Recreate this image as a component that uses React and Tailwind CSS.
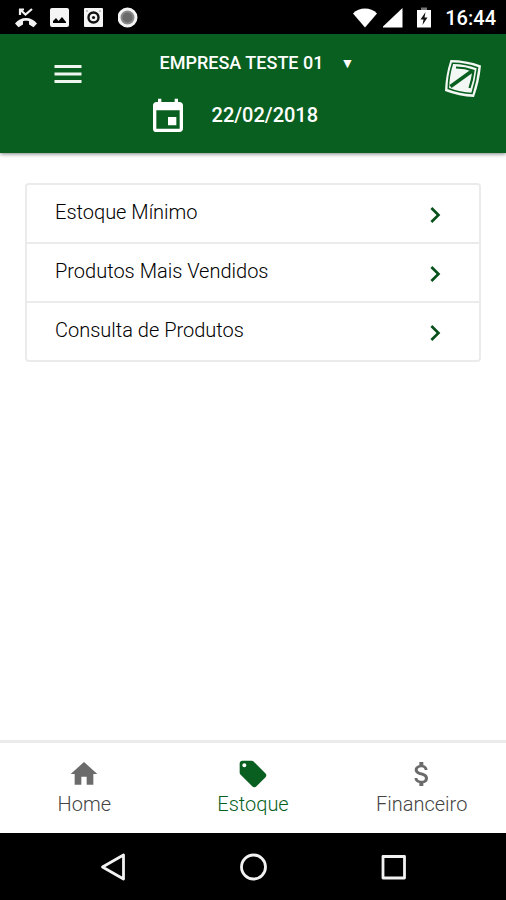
import { useState } from "react";
import {
  MdAttachMoney,
  MdChevronRight,
  MdEvent,
  MdHome,
  MdLocalOffer,
  MdMenu
} from "react-icons/md";

const reports = ["Estoque Mínimo", "Produtos Mais Vendidos", "Consulta de Produtos"];

const tabs = [
  { name: "Home", icon: MdHome },
  { name: "Estoque", icon: MdLocalOffer },
  { name: "Financeiro", icon: MdAttachMoney }
];

const StatusBar = () => (
  <div className="flex h-[34px] items-center justify-between bg-black pl-3.5 pr-2.5 pt-px text-white">
    <div className="flex items-center gap-3">
      <svg className="h-6 w-6" viewBox="0 0 24 24" aria-hidden="true">
        <path d="M6 9V3M5 3.500h5M6 3.500l5.500 5L18 3" fill="none" stroke="#f2f2f2" strokeWidth="2.200" />
        <path d="M1 17.500C6 10 18 10 23 17.500l-3.500 3.700-4.500-2.700v-3.200c-2-.6-4-.6-6 0v3.200l-4.500 2.700z" fill="#f2f2f2" />
      </svg>
      <svg className="h-[22px] w-[22px]" viewBox="0 0 22 22" aria-hidden="true">
        <rect x="0" y="1" width="19" height="19" rx="2" fill="#f5f5f5" />
        <path d="M3 16v-2l3-3 2.500 3 3.500-4 4 5v1z" fill="#000" />
      </svg>
      <svg className="h-[22px] w-[22px]" viewBox="0 0 22 22" aria-hidden="true">
        <rect x="0" y="1" width="19" height="19" rx="1" fill="#f5f5f5" />
        <circle cx="9.500" cy="10.500" r="5" fill="none" stroke="#111" strokeWidth="2.400" />
        <circle cx="9.500" cy="10.500" r="1.600" fill="#111" />
        <circle cx="3" cy="4" r="0.800" fill="#888" />
        <circle cx="16" cy="4" r="0.800" fill="#888" />
      </svg>
      <svg className="h-[22px] w-[22px]" viewBox="0 0 22 22" aria-hidden="true">
        <circle cx="9.500" cy="10.500" r="8.500" fill="#8a8a8a" stroke="#f5f5f5" strokeWidth="3" />
        <circle cx="9.500" cy="10.500" r="5" fill="#6a6a6a" />
      </svg>
    </div>
    <div className="flex items-center">
      <svg className="h-[22px] w-[26px]" viewBox="0 0 26 22" aria-hidden="true">
        <path d="M0 6.500C6-.2 18-.2 24 6.500L12 20.500z" fill="#fff" />
      </svg>
      <svg className="ml-1 h-[22px] w-[22px]" viewBox="0 0 22 22" aria-hidden="true">
        <path d="M19.500 1v19.500H-1z" fill="#fff" />
      </svg>
      <svg className="ml-3 h-[22px] w-4" viewBox="0 0 16 22" aria-hidden="true">
        <path d="M4 0.500h6V3H4z" fill="#777" />
        <path d="M0 3h14v17.500H0z" fill="#fff" />
        <path d="M8.500 5L3.500 12.500H6.500L5.500 18L10.500 10.500H7.500z" fill="#111" />
      </svg>
      <span className="ml-3 text-xl font-medium">16:44</span>
    </div>
  </div>
);

const Header = () => (
  <header className="relative grid h-[119px] grid-cols-[1fr_auto_1fr] items-start bg-[#095f1f] px-6 text-white shadow-[0_1px_4px_rgba(0,0,0,0.5)]">
    <button type="button" aria-label="Menu" className="ml-[26px] mt-[22px] justify-self-start">
      <MdMenu className="h-9 w-9 text-[#eef5ee]" />
    </button>
    <div className="flex flex-col items-start gap-[18px] pr-1 pt-[13px]">
      <div className="ml-3 flex items-center gap-4">
        <select aria-label="Empresa" className="appearance-none bg-transparent text-lg leading-8 font-medium">
          <option>EMPRESA TESTE 01</option>
        </select>
        <span aria-hidden="true" className="pointer-events-none text-sm">▼</span>
      </div>
      <button type="button" className="flex items-center gap-6 text-xl font-medium">
        <MdEvent className="h-10 w-10" />
        <span className="pb-1">22/02/2018</span>
      </button>
    </div>
    <svg className="mt-6 h-10 w-10 justify-self-end" viewBox="0 0 40 40" aria-hidden="true">
      <path d="M8.500 2Q24 2 39 7.500Q37.500 24 32 39Q17 38.500 3 33Q3.500 17 8.500 2z" fill="#f4f8f4" />
      <path d="M10.500 5.200Q23 5 35.500 9.800Q34 23 30 35.500Q18 35.300 6.300 30.600Q6.500 17.500 10.500 5.200z" fill="none" stroke="#095f1f" strokeWidth="1.600" />
      <path d="M8.500 28.500L30 13" stroke="#095f1f" strokeWidth="3.600" />
      <path d="M14 9.500Q23 9.500 31.500 12.700Q30.500 21.500 27.500 30" fill="none" stroke="#095f1f" strokeWidth="2.200" />
    </svg>
  </header>
);

const App = () => {
  const [activeTab, setActiveTab] = useState("Estoque");

  return (
    <div className="flex min-h-screen flex-col bg-white font-[Roboto,sans-serif]">
      <StatusBar />
      <Header />

      <main className="flex-1 px-[25px] pt-[30px]">
        <ul className="divide-y-2 divide-[#ebebeb] rounded-sm border-2 border-[#ebebeb]">
          {reports.map((report) => (
            <li key={report}>
              <button
                type="button"
                className="flex h-[57px] w-full items-start justify-between px-7 pt-[13px] text-left text-xl font-light text-black"
              >
                <span>{report}</span>
                <MdChevronRight className="mt-px h-8 w-8 text-[#07501a]" />
              </button>
            </li>
          ))}
        </ul>
      </main>

      <nav className="grid h-[93px] grid-cols-3 border-t-3 border-[#ebebeb]">
        {tabs.map(({ name, icon: Icon }) => (
          <button
            key={name}
            type="button"
            onClick={() => setActiveTab(name)}
            className={`flex flex-col items-center pt-[15px] text-xl font-light ${
              activeTab === name ? "text-[#095f1f]" : "text-[#444]"
            }`}
          >
            <Icon className={activeTab === name ? "h-8 w-8" : "h-8 w-8 text-[#6b6b6b]"} />
            <span>{name}</span>
          </button>
        ))}
      </nav>

      <div className="grid h-[67px] grid-cols-3 items-center bg-black px-[43px]">
        <button type="button" aria-label="Voltar" className="flex justify-center">
          <svg className="h-7 w-7" viewBox="0 0 28 28" fill="none" stroke="#f2f2f2" strokeWidth="2.800" strokeLinejoin="round">
            <path d="M24.500 2v24L3.500 14z" />
          </svg>
        </button>
        <button type="button" aria-label="Início" className="flex justify-center">
          <svg className="h-7 w-7" viewBox="0 0 28 28" fill="none" stroke="#f2f2f2" strokeWidth="2.800">
            <circle cx="14.500" cy="14" r="12" />
          </svg>
        </button>
        <button type="button" aria-label="Recentes" className="flex justify-center">
          <svg className="h-7 w-7" viewBox="0 0 28 28" fill="none" stroke="#f2f2f2" strokeWidth="2.800" strokeLinejoin="round">
            <rect x="4" y="3.500" width="21.500" height="21.500" />
          </svg>
        </button>
      </div>
    </div>
  );
};

export default App;
